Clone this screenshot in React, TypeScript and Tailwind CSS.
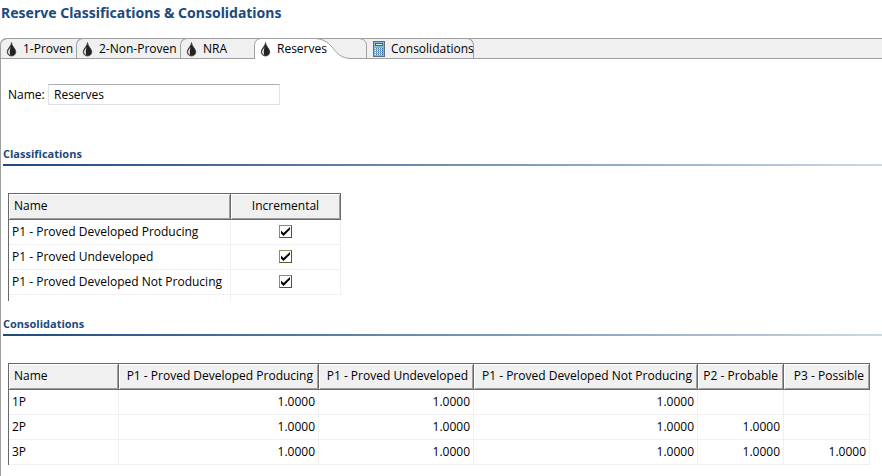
import React from "react";

const Drop = () => (
  <svg width="11" height="16" viewBox="0 0 11 16" className="shrink-0" aria-hidden="true">
    <path d="M5.500 1.500C5.500 5 1.200 7.500 1.200 11C1.200 13.300 3 15 5.500 15C8 15 9.800 13.300 9.800 11C9.800 7.500 5.500 5 5.500 1.500Z" fill="#222" stroke="#444" strokeWidth=".8" />
    <path d="M4.600 6C2.800 8.600 2 9.600 2 11C2 12.500 2.900 13.500 4.200 14C3.500 11.800 3.800 9 4.600 6Z" fill="#e4e4e4" />
  </svg>
);

const Calculator = () => (
  <svg width="12" height="16" viewBox="0 0 12 16" className="shrink-0" shapeRendering="crispEdges" aria-hidden="true">
    <rect width="12" height="16" fill="#5a6f80" />
    <rect x="1" y="1" width="10" height="14" fill="#86b4d4" />
    <rect x="2" y="2" width="8" height="3" fill="#2f7486" />
    <rect x="3" y="3" width="6" height="1" fill="#d9f5c4" />
    {[7, 9, 11, 13].map((y) =>
      [2, 4, 6, 8].map((x) => (
        <React.Fragment key={`${x}-${y}`}>
          <rect x={x} y={y} width="1" height="1" fill="#e6f3fb" />
          <rect x={x + 1} y={y} width="1" height="1" fill={x === 8 ? "#245a9c" : "#4a7da6"} />
        </React.Fragment>
      )),
    )}
  </svg>
);

function Tab({
  label,
  width,
  icon,
  last,
}: {
  label: string;
  width: string;
  icon: React.ReactNode;
  last?: boolean;
}) {
  return (
    <button
      role="tab"
      aria-selected={false}
      className={`flex h-[20px] items-center gap-[6px] whitespace-nowrap border-t border-[#a0a0a0] ${width} ${
        last ? "rounded-tr-[7px] border-r pl-[6px]" : "rounded-tl-[7px] border-l pl-[5px]"
      }`}
    >
      {icon}
      {label}
    </button>
  );
}

function Section({ title }: { title: string }) {
  return (
    <div className="ml-[2px]">
      <h2 className="h-[18px] text-[11px] leading-[16px] font-bold text-[#1b4a7e]">{title}</h2>
      <div className="h-[2px] bg-linear-to-r from-[#1b4a7e] to-[#ccd8e4]" />
    </div>
  );
}

function Check({ label }: { label: string }) {
  return (
    <span className="relative mx-auto block size-[13px]">
      <input
        type="checkbox"
        defaultChecked
        aria-label={label}
        className="peer block size-[13px] appearance-none border border-t-[#8e8f5f] border-r-[#55562f] border-b-[#55562f] border-l-[#8e8f5f] bg-white"
      />
      <svg
        width="13"
        height="13"
        viewBox="0 0 13 13"
        className="pointer-events-none absolute inset-0 hidden peer-checked:block"
        aria-hidden="true"
      >
        <path d="M2 5.500L4.500 8L11 2V4.500L4.500 11L2 8.500Z" fill="#000" />
      </svg>
    </span>
  );
}

const th =
  "h-[27px] border-y border-r border-[#696969] bg-[#f0f0f0] px-[5px] pb-[2px] font-normal whitespace-nowrap shadow-[inset_1px_1px_0_#fff,inset_-1px_-1px_0_#a0a0a0]";
const td = "h-[25px] border-r border-b border-[#f0f0f0] px-[3px] pb-px";

const classes = [
  "P1 - Proved Developed Producing",
  "P1 - Proved Undeveloped",
  "P1 - Proved Developed Not Producing",
];
const columns = [...classes, "P2 - Probable", "P3 - Possible"];
const rows = [
  { name: "1P", filled: 3 },
  { name: "2P", filled: 4 },
  { name: "3P", filled: 5 },
];

export default function App() {
  return (
    <main className="flex min-h-screen flex-col bg-white font-['Open_Sans','Noto_Sans',sans-serif] text-[12px] leading-[16px] text-black">
      <h1 className="h-[38px] pt-[3px] pl-[1px] font-['Noto_Sans',sans-serif] text-[14px] leading-[20px] font-bold text-[#1b4a7e]">
        Reserve Classifications &amp; Consolidations
      </h1>
      <div
        role="tablist"
        className="flex h-[21px] rounded-tl-[7px] border-b border-[#a0a0a0] bg-[#f0f0f0] shadow-[inset_0_1px_0_#a0a0a0]"
      >
        <Tab label="1-Proven" width="w-[76px]" icon={<Drop />} />
        <Tab label="2-Non-Proven" width="w-[104px]" icon={<Drop />} />
        <Tab label="NRA" width="w-[74px]" icon={<Drop />} />
        <button role="tab" aria-selected={true} className="relative h-[21px] w-[113px] whitespace-nowrap">
          <svg width="113" height="21" viewBox="0 0 113 21" className="absolute inset-0" aria-hidden="true">
            <path d="M.5 21V7Q1 1 7 .5H60C82 1 77 20 97 20.500V21Z" fill="#fff" />
            <path d="M.5 21V7Q1 1 7 .5H60C82 1 77 20 97 20.500H113" fill="none" stroke="#a0a0a0" />
            <path d="M60 .5H105Q112 1 112.500 7V20" fill="none" stroke="#a0a0a0" />
          </svg>
          <span className="relative flex h-[20px] items-center gap-[6px] pt-px pl-[6px]">
            <Drop />
            Reserves
          </span>
        </button>
        <Tab label="Consolidations" width="w-[107px]" icon={<Calculator />} last />
      </div>

      <div className="flex-1 border-l border-[#a0a0a0]">
        <div className="flex h-[87px] items-start gap-[5px] pt-[25px] pl-[7px]">
          <label htmlFor="name" className="w-[35px] leading-[21px]">
            Name:
          </label>
          <input
            id="name"
            defaultValue="Reserves"
            className="h-[21px] w-[232px] border border-[#e2e3ea] border-t-[#abadb3] px-[5px] outline-none"
          />
        </div>

        <Section title="Classifications" />
        <div className="mt-[27px] ml-[7px] h-[108px] w-[333px] overflow-hidden border-l border-[#696969]">
          <table className="w-full table-fixed border-separate border-spacing-0">
            <thead>
              <tr>
                <th className={`${th} w-[222px] text-left`}>Name</th>
                <th className={`${th} text-center`}>Incremental</th>
              </tr>
            </thead>
            <tbody>
              {classes.map((c) => (
                <tr key={c}>
                  <td className={td}>{c}</td>
                  <td className={td}>
                    <Check label={`${c} incremental`} />
                  </td>
                </tr>
              ))}
              <tr>
                <td className={td} />
                <td className="h-[25px]" />
              </tr>
            </tbody>
          </table>
        </div>

        <div className="mt-[15px]">
          <Section title="Consolidations" />
        </div>
        <div className="mt-[27px] ml-[7px] w-[862px] border-l border-[#696969]">
          <table className="w-full table-fixed border-separate border-spacing-0">
            <colgroup>
              <col className="w-[110px]" />
              <col className="w-[200px]" />
              <col className="w-[155px]" />
              <col className="w-[224px]" />
              <col className="w-[86px]" />
              <col className="w-[86px]" />
            </colgroup>
            <thead>
              <tr>
                <th className={`${th} text-left`}>Name</th>
                {columns.map((c) => (
                  <th key={c} className={`${th} text-right`}>
                    {c}
                  </th>
                ))}
              </tr>
            </thead>
            <tbody>
              {rows.map((r) => (
                <tr key={r.name}>
                  <td className={td}>{r.name}</td>
                  {columns.map((c, i) => (
                    <td key={c} className={`${td} text-right`}>
                      {i < r.filled ? "1.0000" : ""}
                    </td>
                  ))}
                </tr>
              ))}
            </tbody>
          </table>
        </div>
      </div>
    </main>
  );
}
